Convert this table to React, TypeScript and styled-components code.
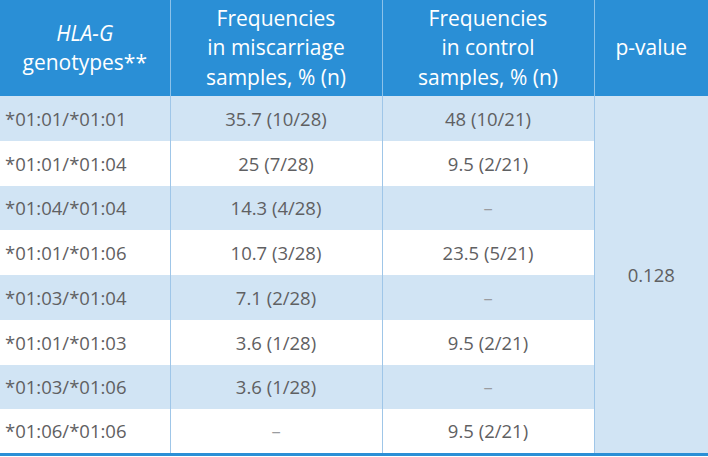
import React from "react";
import styled, { createGlobalStyle } from "styled-components";

const Global = createGlobalStyle`
  html, body { margin: 0; padding: 0; background: #ffffff; }
  body { font-family: "Open Sans", "Noto Sans", sans-serif; }
`;

const Table = styled.table`
  width: 708px;
  border-collapse: collapse;
  table-layout: fixed;
  border-bottom: 3px solid #2a8fd6;
  color: #5f6062;
  font-size: 18.5px;
`;

const HeadCell = styled.th`
  height: 96px;
  padding: 0;
  background: #2a8fd6;
  color: #ffffff;
  font-weight: 400;
  font-size: 21px;
  line-height: 29.5px;
  text-align: center;
  vertical-align: middle;
  border-left: 1px solid #8cc2ea;
  &:first-child { border-left: none; }
`;

const Row = styled.tr<{ $shaded: boolean }>`
  height: 44.75px;
  background: ${(p) => (p.$shaded ? "#d1e4f4" : "#ffffff")};
`;

const Cell = styled.td<{ $left?: boolean; $dash?: boolean }>`
  padding: 0 0 0 ${(p) => (p.$left ? "5px" : "0")};
  text-align: ${(p) => (p.$left ? "left" : "center")};
  vertical-align: middle;
  white-space: nowrap;
  border-left: 1px solid #9fc6e8;
  color: ${(p) => (p.$dash ? "#9a9ca0" : "#5f6062")};
  &:first-child { border-left: none; }
`;

const PCell = styled.td`
  background: #d1e4f4;
  text-align: center;
  vertical-align: middle;
  border-left: 1px solid #9fc6e8;
`;

const rows: [string, string, string][] = [
  ["*01:01/*01:01", "35.7 (10/28)", "48 (10/21)"],
  ["*01:01/*01:04", "25 (7/28)", "9.5 (2/21)"],
  ["*01:04/*01:04", "14.3 (4/28)", "–"],
  ["*01:01/*01:06", "10.7 (3/28)", "23.5 (5/21)"],
  ["*01:03/*01:04", "7.1 (2/28)", "–"],
  ["*01:01/*01:03", "3.6 (1/28)", "9.5 (2/21)"],
  ["*01:03/*01:06", "3.6 (1/28)", "–"],
  ["*01:06/*01:06", "–", "9.5 (2/21)"],
];

export default function App() {
  return (
    <>
      <Global />
      <Table>
        <colgroup>
          <col style={{ width: 170 }} />
          <col style={{ width: 212 }} />
          <col style={{ width: 212 }} />
          <col style={{ width: 114 }} />
        </colgroup>
        <thead>
          <tr>
            <HeadCell>
              <i>HLA-G</i>
              <br />
              genotypes**
            </HeadCell>
            <HeadCell>
              Frequencies
              <br />
              in miscarriage
              <br />
              samples, % (n)
            </HeadCell>
            <HeadCell>
              Frequencies
              <br />
              in control
              <br />
              samples, % (n)
            </HeadCell>
            <HeadCell>p-value</HeadCell>
          </tr>
        </thead>
        <tbody>
          {rows.map((r, i) => (
            <Row key={i} $shaded={i % 2 === 0}>
              <Cell $left>{r[0]}</Cell>
              <Cell $dash={r[1] === "–"}>{r[1]}</Cell>
              <Cell $dash={r[2] === "–"}>{r[2]}</Cell>
              {i === 0 && <PCell rowSpan={8}>0.128</PCell>}
            </Row>
          ))}
        </tbody>
      </Table>
    </>
  );
}
